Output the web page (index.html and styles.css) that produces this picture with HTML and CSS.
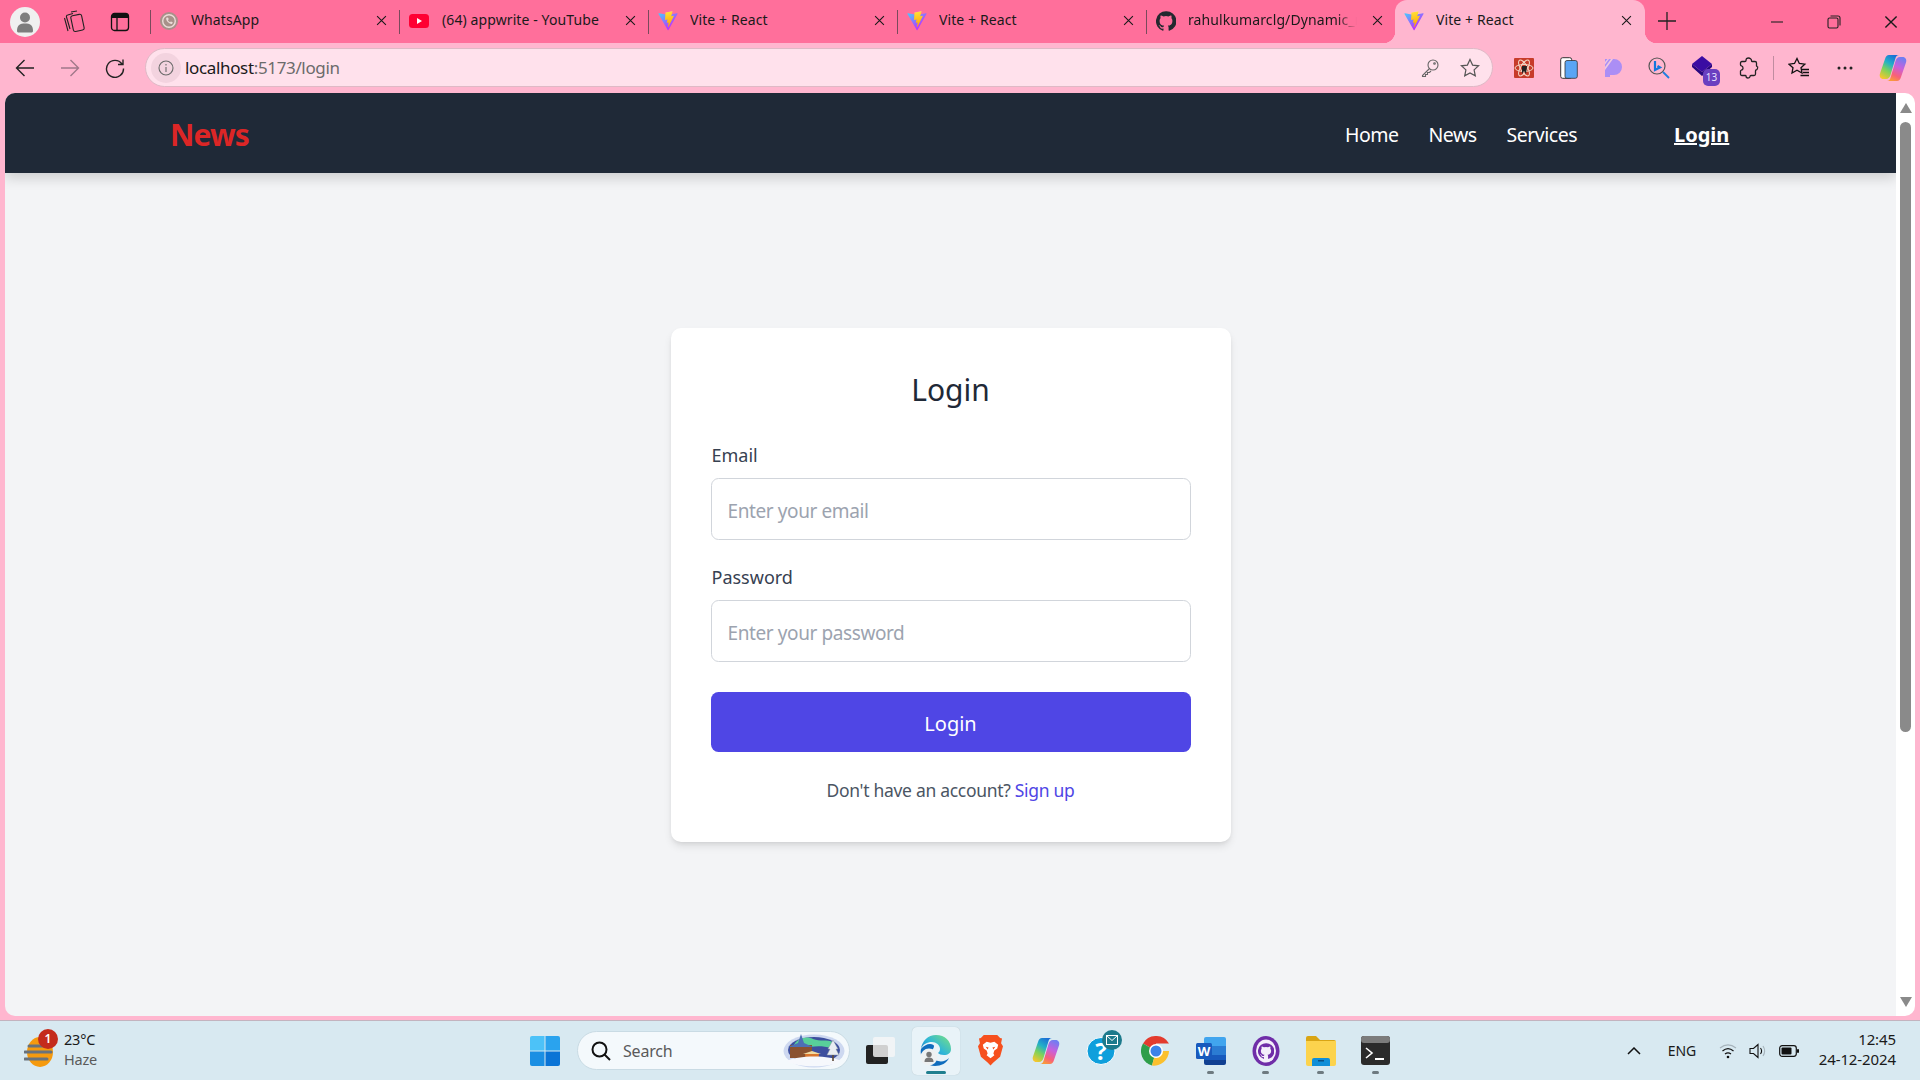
FILE: index.html
```html
<!DOCTYPE html>
<html lang="en">
<head>
<meta charset="utf-8">
<title>Vite + React</title>
<link rel="stylesheet" href="styles.css">
</head>
<body>
<svg class="defs" width="0" height="0" aria-hidden="true">
  <defs>
    <linearGradient id="va" x1="6" y1="33" x2="235" y2="344" gradientUnits="userSpaceOnUse"><stop offset="0" stop-color="#41d1ff"/><stop offset="1" stop-color="#bd34fe"/></linearGradient>
    <linearGradient id="vb" x1="194" y1="8" x2="236" y2="292" gradientUnits="userSpaceOnUse"><stop offset="0" stop-color="#ffea83"/><stop offset=".08" stop-color="#ffdd35"/><stop offset="1" stop-color="#ffa800"/></linearGradient>
    <linearGradient id="cop" x1=".7" y1="0" x2=".2" y2="1"><stop offset="0" stop-color="#1c6fd6"/><stop offset=".35" stop-color="#22b0c8"/><stop offset=".65" stop-color="#7fd25a"/><stop offset="1" stop-color="#f6c62e"/></linearGradient>
    <linearGradient id="cop2" x1=".7" y1="0" x2=".3" y2="1"><stop offset="0" stop-color="#6f7df2"/><stop offset=".4" stop-color="#c860dc"/><stop offset=".75" stop-color="#f8607a"/><stop offset="1" stop-color="#f99a3a"/></linearGradient>
    <linearGradient id="edge" x1="0" y1="1" x2="1" y2=".2"><stop offset="0" stop-color="#1a6fc0"/><stop offset=".5" stop-color="#2fb6d8"/><stop offset="1" stop-color="#6fdc8c"/></linearGradient>
    <symbol id="vite" viewBox="0 0 410 404">
      <path fill="url(#va)" d="M399.641 59.5246L215.643 388.545C211.844 395.338 202.084 395.378 198.228 388.618L10.5817 59.5563C6.38087 52.1896 12.6802 43.2665 21.0281 44.7586L205.223 77.6824C206.398 77.8924 207.601 77.8904 208.776 77.6763L389.119 44.8058C397.439 43.2894 403.768 52.1434 399.641 59.5246Z"/>
      <path fill="url(#vb)" d="M292.965 1.5744L156.801 28.2552C154.563 28.6937 152.906 30.5903 152.771 32.8664L144.395 174.33C144.198 177.662 147.258 180.248 150.51 179.498L188.42 170.749C191.967 169.931 195.172 173.055 194.443 176.622L183.18 231.775C182.422 235.487 185.907 238.661 189.532 237.56L212.947 230.446C216.577 229.344 220.065 232.527 219.297 236.242L201.398 322.875C200.278 328.294 207.486 331.249 210.492 326.603L212.5 323.5L323.454 102.072C325.312 98.3645 322.108 94.137 318.036 94.9228L279.014 102.454C275.347 103.161 272.227 99.746 273.262 96.1583L298.731 7.86689C299.767 4.27314 296.636 0.855181 292.965 1.5744Z"/>
    </symbol>
    <symbol id="x" viewBox="0 0 12 12"><path d="M1.2 1.2l9.6 9.6M10.8 1.2l-9.6 9.6" fill="none" stroke="#1a1a1a" stroke-width="1.2"/></symbol>
    <symbol id="gh" viewBox="0 0 24 24"><path d="M12 .3a12 12 0 0 0-3.8 23.4c.6.1.8-.3.8-.6v-2c-3.3.7-4-1.6-4-1.6-.6-1.4-1.4-1.8-1.4-1.8-1-.7.1-.7.1-.7 1.2.1 1.8 1.2 1.8 1.2 1 1.8 2.8 1.3 3.5 1 .1-.8.4-1.3.8-1.6-2.7-.3-5.5-1.3-5.5-6 0-1.2.5-2.3 1.3-3.1-.2-.4-.6-1.6 0-3.2 0 0 1-.3 3.4 1.2a11.5 11.5 0 0 1 6 0c2.3-1.5 3.3-1.2 3.3-1.2.7 1.6.3 2.8.1 3.2.8.8 1.3 1.9 1.3 3.1 0 4.7-2.8 5.7-5.5 6 .5.4.9 1.1.9 2.3v3.3c0 .3.2.7.8.6A12 12 0 0 0 12 .3z"/></symbol>
    <symbol id="copilot" viewBox="0 0 30 30">
      <path fill="url(#cop)" d="M11 2h10c-2 0-3 1.500-3.600 3.500L12.500 22c-.6 2-2 4-4.500 4H5.500C2.500 26 1 23.500 2 20.500L7 6c.8-2.500 2-4 4-4z"/>
      <path fill="url(#cop2)" d="M19 28H9c2 0 3-1.500 3.600-3.500L17.500 8c.6-2 2-4 4.500-4h2.500c3 0 4.500 2.500 3.500 5.500L23 24c-.8 2.500-2 4-4 4z"/>
    </symbol>
  </defs>
</svg>

<header class="tabstrip">
  <div class="strip-left">
    <div class="avatar">
      <svg width="20" height="22" viewBox="0 0 20 22"><circle cx="10" cy="6.500" r="5" fill="#7d7d7d"/><path d="M2 20c0-6 3-7.500 8-7.500s8 1.500 8 7.500c0 1-1 1.500-2 1.500H4c-1 0-2-.5-2-1.500z" fill="#7d7d7d"/></svg>
    </div>
    <svg class="strip-icon" width="22" height="24" viewBox="0 0 22 24" fill="none" stroke="#222" stroke-width="1.100"><rect x="9" y="5" width="11" height="16" rx="2" transform="rotate(-12 14 13)"/><path d="M7 19L3.500 7c-.3-1 .2-1.800 1.200-2L10 3.500M5 21 1.500 8M8 2l6-1"/></svg>
    <svg class="strip-icon second" width="20" height="20" viewBox="0 0 20 20"><rect x="1.500" y="1.500" width="17" height="17" rx="3" fill="none" stroke="#111" stroke-width="1.300"/><path d="M1.500 4.500a3 3 0 0 1 3-3h11a3 3 0 0 1 3 3V6h-17z" fill="#111"/><path d="M7 6v12" stroke="#111" stroke-width="1.300"/></svg>
  </div>
  <nav class="tabs">
    <div class="tab sep">
      <svg class="favicon wa" width="18" height="18" viewBox="0 0 18 18"><circle cx="9" cy="9" r="9" fill="#a8918a"/><circle cx="9" cy="9" r="6.300" fill="none" stroke="#ecdcd8" stroke-width="1.400"/><path d="M6.300 5.800c-.9 2.700 2.700 6.400 5.700 6.100l.8-1.600-1.900-.9-.9.900c-1.100-.4-1.800-1.300-2.100-2.200l.9-.8-.8-1.900z" fill="#ecdcd8"/></svg>
      <span class="title">WhatsApp</span>
      <svg class="close" width="11" height="11"><use href="#x"/></svg>
    </div>
    <div class="tab sep">
      <svg class="favicon yt" width="20" height="14" viewBox="0 0 20 14"><rect width="20" height="14" rx="3.500" fill="#ff0033"/><path d="M8 4l5 3-5 3z" fill="#fff"/></svg>
      <span class="title">(64) appwrite - YouTube</span>
      <svg class="close" width="11" height="11"><use href="#x"/></svg>
    </div>
    <div class="tab sep">
      <svg class="favicon" width="20" height="20"><use href="#vite"/></svg>
      <span class="title">Vite + React</span>
      <svg class="close" width="11" height="11"><use href="#x"/></svg>
    </div>
    <div class="tab sep">
      <svg class="favicon" width="20" height="20"><use href="#vite"/></svg>
      <span class="title">Vite + React</span>
      <svg class="close" width="11" height="11"><use href="#x"/></svg>
    </div>
    <div class="tab sep">
      <svg class="favicon" width="20" height="20" fill="#24292f"><use href="#gh"/></svg>
      <span class="title clip">rahulkumarclg/Dynamic_r</span>
      <svg class="close" width="11" height="11"><use href="#x"/></svg>
    </div>
    <div class="tab active">
      <svg class="favicon" width="20" height="20"><use href="#vite"/></svg>
      <span class="title">Vite + React</span>
      <svg class="close" width="11" height="11"><use href="#x"/></svg>
    </div>
  </nav>
  <svg class="newtab" width="18" height="18" viewBox="0 0 18 18"><path d="M9 0v18M0 9h18" stroke="#222" stroke-width="1.300"/></svg>
  <div class="winctl">
    <svg width="14" height="14" viewBox="0 0 14 14"><path d="M1 7h12" stroke="#222" stroke-width="1.100"/></svg>
    <svg width="14" height="14" viewBox="0 0 14 14" fill="none" stroke="#222" stroke-width="1.100"><rect x="1" y="3" width="10" height="10" rx="1.500"/><path d="M3.500 1H11a2 2 0 0 1 2 2v7.500"/></svg>
    <svg width="14" height="14"><use href="#x"/></svg>
  </div>
</header>

<div class="toolbar">
  <div class="nav-btns">
    <svg width="20" height="20" viewBox="0 0 20 20" fill="none" stroke="#222" stroke-width="1.400"><path d="M19 10H1.500M9.500 2l-8 8 8 8"/></svg>
    <svg width="20" height="20" viewBox="0 0 20 20" fill="none" stroke="#a0788a" stroke-width="1.400"><path d="M1 10h17.500M10.500 2l8 8-8 8"/></svg>
    <svg width="20" height="20" viewBox="0 0 20 20" fill="none" stroke="#222" stroke-width="1.400"><path d="M17 6a8.500 8.500 0 1 0 1.500 4.500M18 1.500V6.500h-5"/></svg>
  </div>
  <div class="address">
    <span class="info"><svg width="16" height="16" viewBox="0 0 16 16" fill="none" stroke="#6a6a6a" stroke-width="1.100"><circle cx="8" cy="8" r="7"/><path d="M8 7v5M8 4v1.400"/></svg></span>
    <span class="url"><span class="host">localhost</span>:5173/login</span>
    <svg class="addr-icon" width="20" height="20" viewBox="0 0 20 20" fill="none" stroke="#666" stroke-width="1.100"><circle cx="13" cy="7" r="5"/><path d="M9.500 10.500 2.500 17.500v1h3v-2h2v-2h2l1.500-1.500"/><circle cx="14.500" cy="5.500" r=".8"/></svg>
    <svg class="addr-icon last" width="20" height="20" viewBox="0 0 20 20" fill="none" stroke="#555" stroke-width="1.200"><path d="M10 1.500l2.600 5.600 6 .7-4.500 4.100 1.200 6L10 15l-5.300 2.900 1.200-6L1.400 7.800l6-.7z"/></svg>
  </div>
  <div class="exts">
    <span class="ext"><svg width="20" height="20" viewBox="0 0 20 20"><rect width="20" height="20" rx="1" fill="#c73b2a"/><g fill="none" stroke="#f3d9c8" stroke-width="1"><ellipse cx="10" cy="10" rx="9" ry="3.500"/><ellipse cx="10" cy="10" rx="9" ry="3.500" transform="rotate(60 10 10)"/><ellipse cx="10" cy="10" rx="9" ry="3.500" transform="rotate(120 10 10)"/></g><path d="M8 8h5l-1 8-2-3-2 3z" fill="#222"/></svg></span>
    <span class="ext"><svg width="18" height="22" viewBox="0 0 18 22"><rect x=".7" y=".7" width="11" height="20.600" rx="2" fill="#fff" stroke="#333"/><rect x="5" y="3.500" width="12.300" height="17.800" rx="2" fill="#5aa5f5" stroke="#333" stroke-width=".8"/></svg></span>
    <span class="ext"><svg width="18" height="18" viewBox="0 0 18 18"><path d="M0 0h9a8 8 0 0 1 0 16H5v2H0z" fill="#ab8ef5"/><path d="M0 8 6 0h2L0 11zM0 3 2.500 0H4L0 5.500z" fill="#f0c8e0"/></svg></span>
    <span class="ext"><svg width="22" height="22" viewBox="0 0 22 22" fill="none"><circle cx="9" cy="9" r="8" stroke="#555" stroke-width="1.200"/><path d="M15 15l6 6" stroke="#1f7fe0" stroke-width="1.800"/><path d="M7 4v9l5-2.500-2.500-1.500" stroke="#1277dd" stroke-width="2.200"/></svg></span>
    <span class="ext ext-badged"><svg width="20" height="20" viewBox="0 0 20 20"><path d="M10 0l10 8-10 8L0 8z" fill="#3a0ca3"/><path d="M0 8v3l10 9 10-9V8l-10 8z" fill="#280880"/></svg><span class="count">13</span></span>
    <span class="ext"><svg width="20" height="22" viewBox="0 0 20 22" fill="none" stroke="#222" stroke-width="1.300"><path d="M7 3.500C7 1.800 8.300 1 9.600 1S12.500 2 12.500 3.500c0 .7 0 1 .5 1h3c1 0 1.500.5 1.500 1.500v3c0 .5.500.5 1 .5M18.500 9.500c.5 2-.5 3.500-1.500 3.500-.5 0-.5.500-.5 1v3c0 1-.5 1.500-1.500 1.500h-3c-.5 0-1 .5-1 1 0 1-1 1.500-2 1.500s-2-1-2-2c0-.5-.3-.5-.8-.5H3c-1 0-1.500-.5-1.500-1.500v-3c0-.5.500-.8 1-1 1 0 1.500-1 1.500-2s-.5-2-1.500-2.200c-.5 0-1-.5-1-1V6c0-1 .5-1.500 1.500-1.500h3c.5 0 1-.3 1-1"/></svg></span>
    <span class="tool-sep"></span>
    <span class="ext"><svg width="22" height="22" viewBox="0 0 22 22" fill="none" stroke="#111" stroke-width="1.300"><path d="M9 1.500l2.300 5 5.500.7-3.800 3.500 1 5.300-5-2.700-5 2.700 1-5.300L1 7.200l5.500-.7z"/><path d="M14 12.500h7M15 15.500h6M12.500 18.500h8.500"/></svg></span>
    <span class="ext dots"><svg width="16" height="4" viewBox="0 0 16 4" fill="#222"><circle cx="2" cy="2" r="1.500"/><circle cx="8" cy="2" r="1.500"/><circle cx="14" cy="2" r="1.500"/></svg></span>
    <span class="ext wide"><svg width="30" height="30"><use href="#copilot"/></svg></span>
  </div>
</div>

<div class="viewport">
  <div class="page">
    <header class="site-nav">
      <a class="brand">News</a>
      <div class="site-links">
        <a class="site-link">Home</a>
        <a class="site-link">News</a>
        <a class="site-link">Services</a>
      </div>
      <a class="site-login">Login</a>
    </header>
    <main class="page-body">
      <form class="card">
        <h2 class="card-title">Login</h2>
        <div class="field">
          <label class="label">Email</label>
          <input class="input" type="email" placeholder="Enter your email">
        </div>
        <div class="field">
          <label class="label">Password</label>
          <input class="input" type="password" placeholder="Enter your password">
        </div>
        <button class="submit" type="button">Login</button>
        <p class="foot">Don't have an account? <a class="signup">Sign up</a></p>
      </form>
    </main>
  </div>
  <div class="scrollbar">
    <span class="arrow up"></span>
    <span class="thumb"></span>
    <span class="arrow down"></span>
  </div>
</div>

<footer class="taskbar">
  <div class="weather">
    <span class="weather-icon">
      <svg width="32" height="34" viewBox="0 0 32 34"><ellipse cx="16" cy="19" rx="13" ry="15" fill="#f59a0e"/><path d="M1 19h26M5 13h16M1 26h22" stroke="#68727c" stroke-width="3" stroke-linecap="round"/></svg>
      <span class="weather-badge">1</span>
    </span>
    <span class="weather-text"><span class="temp">23°C</span><span class="cond">Haze</span></span>
  </div>
  <svg class="winlogo" width="30" height="30" viewBox="0 0 30 30"><path d="M0 2a2 2 0 0 1 2-2h12.500v14.500H0z" fill="#4cc2f8"/><path d="M15.500 0H28a2 2 0 0 1 2 2v12.500H15.500z" fill="#2aa3ee"/><path d="M0 15.500h14.500V30H2a2 2 0 0 1-2-2z" fill="#1b8fe3"/><path d="M15.500 15.500H30V28a2 2 0 0 1-2 2H15.500z" fill="#0a74d6"/></svg>
  <div class="search">
    <svg width="20" height="20" viewBox="0 0 20 20" fill="none" stroke="#111" stroke-width="2"><circle cx="8.500" cy="8.500" r="7"/><path d="M13.500 13.500l5.500 5.500"/></svg>
    <span class="search-text">Search</span>
    <svg class="scene" width="62" height="34" viewBox="0 0 62 34"><ellipse cx="31" cy="17" rx="30.500" ry="16.500" fill="#cdd8f0"/><ellipse cx="31" cy="16" rx="26" ry="13" fill="#3d4f9e"/><path d="M10 13C14 3 24 2 30 5c7 3 14 0 20 3l-2 6c-10-3-20-2-28 1z" fill="#58cf9a"/><path d="M7 11h22v13H7z" fill="#8a5230"/><path d="M18 0l3 9 9 4H5l10-4z" fill="#4d6fb4"/><path d="M22 20h14l-1 8H23z" fill="#d9762e"/><path d="M20 20l9-3 9 3z" fill="#f0d9a0"/><path d="M4 27c10-6 44-6 54 0-10 7-44 7-54 0z" fill="#f6f8fc"/><path d="M50 6l5 9h-2l3 6h-12l3-6h-2z" fill="#e9edf2" stroke="#8a96a2" stroke-width=".5"/><rect x="49.200" y="21" width="1.600" height="6" fill="#5c4a3a"/></svg>
  </div>
  <div class="apps">
    <span class="app"><svg width="29" height="27" viewBox="0 0 29 27"><rect x="0" y="8" width="22" height="19" rx="2" fill="#222"/><rect x="7" y="0" width="22" height="20" rx="2" fill="#f6f6f6" fill-opacity=".82"/></svg></span>
    <span class="app current"><svg width="31" height="31" viewBox="0 0 31 31"><path d="M1 14C2 6 8 0 16 0c9 0 15 6 15 14 0 4-3 6-7 6-3 0-5-1-6-2 1-1 2-2 2-4 0-4-4-7-8-7C7 7 3 9 1 14z" fill="url(#edge)"/><path d="M1 14c2-3 6-5 9-5 4 0 5 2 3 5-2 4 0 10 5 12 4 1 8 0 11-3-2 5-8 8-14 8C7 31-1 24 1 14z" fill="#0f6cbd"/><circle cx="9" cy="22" r="8.500" fill="#eef1f2"/><circle cx="9" cy="19.500" r="2.700" fill="#777"/><path d="M4.500 27c0-3.500 2-4.500 4.500-4.500s4.500 1 4.500 4.500z" fill="#777"/></svg></span>
    <span class="app"><svg width="25" height="31" viewBox="0 0 26 32"><path d="M6 0h14l3 3 2 .5-1 5 2 3-3 11-7 6-3 3-3-3-7-6-3-11 2-3-1-5 2-.5z" fill="#f6501e"/><path d="M5 10l4-3 4 1 4-1 4 3-1 4-3 2-1 3 1 2-4 3-4-3 1-2-1-3-3-2z" fill="#fff"/><path d="M8 12l3 1-1 2zM18 12l-3 1 1 2z" fill="#f6501e"/></svg></span>
    <span class="app"><svg width="30" height="30"><use href="#copilot"/></svg></span>
    <span class="app"><svg class="over" width="42" height="38" viewBox="0 0 42 38"><ellipse cx="21" cy="19" rx="14" ry="13.500" fill="#0f9fdc" stroke="#fff"/><text x="21" y="28" class="help-mark">?</text><circle cx="32" cy="8" r="10" fill="#1d7a8c"/><rect x="26.500" y="3.500" width="11" height="9" fill="none" stroke="#fff"/><path d="M26.500 3.500l5.500 5 5.500-5" fill="none" stroke="#fff"/></svg></span>
    <span class="app"><svg width="30" height="30" viewBox="0 0 30 30"><path d="M15 15 2 7.500A15 15 0 0 1 28 7.500H15z" fill="#e33b2e"/><path d="M15 15 2 7.500A15 15 0 0 0 11 29.500z" fill="#2e9e4a"/><path d="M15 15h13A15 15 0 0 1 11 29.500z" fill="#fbc02d"/><circle cx="15" cy="15" r="7" fill="#fff"/><circle cx="15" cy="15" r="5.500" fill="#3b82e8"/></svg></span>
    <span class="app dotted"><svg width="30" height="28" viewBox="0 0 30 28"><path d="M8 2a2 2 0 0 1 2-2h18a2 2 0 0 1 2 2v7H8z" fill="#41a5ee"/><rect x="8" y="9" width="22" height="9" fill="#2b7cd3"/><rect x="8" y="18" width="22" height="5" fill="#185abd"/><path d="M8 23h22v3a2 2 0 0 1-2 2H10a2 2 0 0 1-2-2z" fill="#103f91"/><rect x="0" y="6" width="16" height="16" rx="1.500" fill="#185abd"/><text x="8" y="18.500" class="word-mark">W</text></svg></span>
    <span class="app dotted"><svg width="28" height="30" viewBox="0 0 28 30"><ellipse cx="14" cy="15" rx="13.500" ry="15" fill="#6f2da8"/><ellipse cx="14" cy="15" rx="10" ry="11.500" fill="#f3eefa"/><svg x="6" y="6" width="16" height="18" fill="#6f2da8"><use href="#gh"/></svg></svg></span>
    <span class="app dotted"><svg width="30" height="30" viewBox="0 0 30 30"><path d="M0 2a2 2 0 0 1 2-2h8l4 4h14a2 2 0 0 1 2 2v4H0z" fill="#d9a514"/><path d="M0 5h30v23a2 2 0 0 1-2 2H2a2 2 0 0 1-2-2z" fill="#fcd34d"/><path d="M6 30v-6a2 2 0 0 1 2-2h14a2 2 0 0 1 2 2v6z" fill="#0f8ed8"/><rect x="12" y="24" width="6" height="1.500" fill="#0a4f84"/></svg></span>
    <span class="app dotted"><svg width="29" height="29" viewBox="0 0 29 29"><rect width="29" height="29" rx="3" fill="#2b2b2b"/><rect width="29" height="7" rx="3" fill="#7c7c7c"/><path d="M5 12l6 5-6 5" fill="none" stroke="#fff" stroke-width="1.600"/><path d="M14 23h9" stroke="#fff" stroke-width="2"/></svg></span>
  </div>
  <div class="tray">
    <svg class="chev" width="14" height="8" viewBox="0 0 14 8" fill="none" stroke="#111" stroke-width="1.500"><path d="M1 7l6-6 6 6"/></svg>
    <span class="lang">ENG</span>
    <svg class="wifi" width="18" height="16" viewBox="0 0 18 16" fill="none" stroke="#111" stroke-width="1.200"><path d="M1 5c5-4 11-4 16 0" stroke="#a7b4bc"/><path d="M3.500 8c3.500-3 7.500-3 11 0M6 11c2-1.500 4-1.500 6 0"/><circle cx="9" cy="14" r="1.300" fill="#111" stroke="none"/></svg>
    <svg class="vol" width="20" height="16" viewBox="0 0 20 16" fill="none" stroke="#111" stroke-width="1.100"><path d="M1 5.500h3.500L9 1.500v13l-4.500-4H1z"/><path d="M11.500 5c1.300 1.800 1.300 4.200 0 6"/><path d="M14 3c2 3 2 7 0 10" stroke="#a7b4bc"/></svg>
    <svg class="batt" width="20" height="12" viewBox="0 0 20 12"><rect x=".7" y=".7" width="16.600" height="10.600" rx="2.500" fill="none" stroke="#111" stroke-width="1.200"/><rect x="2.500" y="2.500" width="10" height="7" rx="1" fill="#111"/><rect x="18" y="4" width="2" height="4" rx="1" fill="#111"/></svg>
    <span class="clock"><span>12:45</span><span>24-12-2024</span></span>
  </div>
</footer>
</body>
</html>
```

FILE: styles.css
```css
* { box-sizing: border-box; }
html, body { margin: 0; padding: 0; }
body {
  width: 1920px;
  height: 1080px;
  overflow: hidden;
  display: flex;
  flex-direction: column;
  font-family: "Noto Sans", "Open Sans", sans-serif;
  background: #ffb6cf;
}
.defs { position: absolute; }
.over { overflow: visible; }

/* browser tab strip */
.tabstrip {
  height: 43px;
  flex: none;
  display: flex;
  align-items: center;
  background: #ff6f9b;
}
.strip-left { width: 150px; flex: none; display: flex; align-items: center; padding-left: 10px; }
.avatar {
  width: 30px; height: 30px; border-radius: 50%;
  background: #f0f0f0;
  display: flex; align-items: center; justify-content: center;
}
.strip-icon { margin-left: 23px; }
.strip-icon.second { margin-left: 25px; }
.tabs { display: flex; height: 43px; }
.tab {
  width: 249px;
  height: 43px;
  display: flex;
  align-items: center;
  padding: 0 0 2px 10px;
  position: relative;
  font-size: 14px;
  color: #1a1a1a;
}
.tab.sep::before {
  content: "";
  position: absolute;
  left: 0; top: 10px;
  width: 1px; height: 24px;
  background: #7a4a5c;
}
.favicon { flex: none; margin-right: 12px; }
.favicon.yt { margin-right: 13px; }
.favicon.wa { margin-right: 13px; }
.title { flex: 1; white-space: nowrap; overflow: hidden; letter-spacing: .1px; margin-bottom: 2px; }
.title.clip {
  flex: none;
  width: 169px;
  -webkit-mask-image: linear-gradient(to right, #000 88%, transparent);
  mask-image: linear-gradient(to right, #000 88%, transparent);
}
.close { flex: none; margin-left: auto; margin-right: 12px; }
.tab.active {
  width: 250px;
  background: #ffb6cf;
  border-radius: 12px 12px 0 0;
  padding-left: 9px;
}
.tab.active .close { margin-right: 13px; }
.tab.active::before, .tab.active::after {
  content: "";
  position: absolute;
  bottom: 0;
  width: 12px; height: 12px;
}
.tab.active::before { left: -12px; background: radial-gradient(circle at 0 0, transparent 12px, #ffb6cf 12.5px); }
.tab.active::after { right: -12px; background: radial-gradient(circle at 100% 0, transparent 12px, #ffb6cf 12.5px); }
.newtab { margin-left: 13px; flex: none; margin-bottom: 2px; }
.winctl { margin-left: auto; display: flex; align-items: center; gap: 43px; padding-right: 22px; }

/* browser toolbar */
.toolbar {
  height: 50px;
  flex: none;
  display: flex;
  align-items: center;
  background: #ffb6cf;
  padding-bottom: 1px;
}
.nav-btns { width: 145px; flex: none; display: flex; gap: 25px; padding-left: 15px; }
.address {
  width: 1348px;
  height: 39px;
  flex: none;
  display: flex;
  align-items: center;
  background: #ffe1ec;
  border: 1px solid #dfb9c6;
  border-radius: 20px;
  padding-left: 5px;
  font-size: 17px;
}
.info {
  width: 30px; height: 30px; border-radius: 50%;
  background: #f3d3df;
  display: flex; align-items: center; justify-content: center;
  flex: none;
}
.url { flex: 1; margin-left: 4px; color: #6b6b6b; letter-spacing: -.35px; }
.host { color: #1a1a1a; }
.addr-icon { flex: none; margin-right: 20px; }
.addr-icon.last { margin-right: 12px; }
.exts { display: flex; align-items: center; padding-left: 8px; }
.ext {
  width: 45px; height: 30px;
  flex: none;
  display: flex; align-items: center; justify-content: center;
  position: relative;
}
.ext.wide { width: 50px; }
.ext-badged svg { margin-right: 4px; margin-top: -3px; }
.count {
  position: absolute;
  right: 6px; bottom: -3px;
  width: 17px; height: 17px;
  border-radius: 5px;
  background: #6a3fc0;
  color: #e8e0ff;
  font-size: 10px;
  line-height: 17px;
  text-align: center;
}
.tool-sep { width: 1px; height: 24px; background: #c08ca0; margin: 0 2px; flex: none; }
.dots { width: 47px; }

/* viewport */
.viewport {
  flex: 1;
  min-height: 0;
  display: flex;
  padding: 0 5px 4px 5px;
  background: #ffb6cf;
}
.page {
  flex: 1;
  min-width: 0;
  display: flex;
  flex-direction: column;
  background: #f3f4f6;
  border-radius: 10px 0 0 10px;
  overflow: hidden;
}
.site-nav {
  height: 80px;
  flex: none;
  display: flex;
  align-items: center;
  background: #1f2937;
  color: #fff;
  padding: 2px 0 0 165px;
  box-shadow: 0 5px 12px rgba(0,0,0,.16);
  position: relative;
}
.brand { color: #dc2626; font-size: 30px; font-weight: 700; letter-spacing: -.9px; width: 1175px; }
.site-links { display: flex; gap: 30px; font-size: 19.5px; letter-spacing: -.5px; width: 329px; }
.site-login { font-size: 20px; font-weight: 700; text-decoration: underline; letter-spacing: 0; }
.page-body { flex: 1; padding-top: 155px; display: flex; justify-content: center; }
.card {
  width: 560px;
  height: 514px;
  background: #fff;
  border-radius: 10px;
  padding: 40px;
  box-shadow: 0 5px 8px -1px rgba(0,0,0,.1), 0 2px 5px -2px rgba(0,0,0,.1);
}
.card-title {
  margin: 0 0 30px;
  height: 44px;
  line-height: 44px;
  text-align: center;
  font-size: 30px;
  font-weight: 400;
  color: #1f2937;
  letter-spacing: 0;
}
.field { margin-bottom: 24px; }
.label {
  display: block;
  height: 25px;
  line-height: 25px;
  margin-bottom: 11px;
  padding: 1px 0 0 1px;
  font-size: 18px;
  font-weight: 400;
  color: #374151;
  letter-spacing: 0;
}
.input {
  display: block;
  width: 100%;
  height: 62px;
  padding: 4px 16px 0;
  border: 1px solid #d1d5db;
  border-radius: 7.5px;
  background: #fff;
  font-family: inherit;
  font-size: 19px;
  letter-spacing: -.4px;
  outline: none;
}
.input::placeholder { color: #9ca3af; opacity: 1; }
.submit {
  display: block;
  width: 100%;
  height: 60px;
  margin-top: 30px;
  padding: 2px 0 0;
  border: 0;
  border-radius: 7.5px;
  background: #4f46e5;
  color: #fff;
  font-family: inherit;
  font-size: 20px;
  font-weight: 400;
  letter-spacing: 0;
}
.foot {
  margin: 26px 0 0;
  height: 25px;
  line-height: 25px;
  text-align: center;
  font-size: 17.5px;
  color: #4b5563;
  letter-spacing: -.3px;
}
.signup { color: #4f46e5; }

/* scrollbar */
.scrollbar {
  width: 19px;
  flex: none;
  background: #fff;
  border-radius: 0 10px 10px 0;
  display: flex;
  flex-direction: column;
  align-items: center;
  padding: 10px 0 9px;
}
.arrow { width: 0; height: 0; border-left: 6.5px solid transparent; border-right: 6.5px solid transparent; flex: none; }
.arrow.up { border-bottom: 10px solid #8a8a8a; }
.arrow.down { border-top: 10px solid #8a8a8a; margin-top: auto; }
.thumb { width: 11px; height: 610px; margin-top: 9px; border-radius: 6px; background: #8a8a8a; flex: none; }

/* taskbar */
.taskbar {
  height: 60px;
  flex: none;
  display: flex;
  align-items: center;
  background: #d8e9f1;
  border-top: 1px solid #c3b3bf;
  color: #1a1a1a;
}
.weather { display: flex; align-items: center; width: 530px; flex: none; padding-left: 24px; }
.weather-icon { position: relative; width: 40px; height: 36px; flex: none; }
.weather-badge {
  position: absolute;
  left: 14px; top: -4px;
  width: 20px; height: 20px;
  border-radius: 50%;
  background: #c42b1c;
  color: #fff;
  font-size: 12px;
  font-weight: 600;
  line-height: 20px;
  text-align: center;
}
.weather-text { display: flex; flex-direction: column; font-size: 14.5px; line-height: 20px; letter-spacing: -.2px; padding-bottom: 3px; }
.cond { color: #5a5a5a; }
.winlogo { flex: none; }
.search {
  width: 273px;
  height: 39px;
  flex: none;
  margin-left: 17px;
  display: flex;
  align-items: center;
  padding-left: 13px;
  background: #f4f9fc;
  border: 1px solid #c9dbe4;
  border-radius: 20px;
}
.search-text { margin-left: 12px; font-size: 16px; color: #5a5a5a; flex: 1; letter-spacing: -.2px; }
.scene { flex: none; margin-right: 4px; }
.apps { display: flex; margin-left: 3px; }
.app {
  width: 55px; height: 48px;
  flex: none;
  display: flex; align-items: center; justify-content: center;
  position: relative;
}
.app.current { background: #e9f3f8; border-radius: 5px; width: 48px; margin: 0 3.5px; box-shadow: 0 0 1px rgba(0,0,0,.2); }
.app.current::after {
  content: "";
  position: absolute;
  bottom: 1px; left: 14px;
  width: 20px; height: 3px;
  border-radius: 2px;
  background: #1f7f8f;
}
.app.dotted::after {
  content: "";
  position: absolute;
  bottom: 1px; left: 24px;
  width: 7px; height: 3px;
  border-radius: 2px;
  background: #6e7a80;
}
.help-mark { font-family: "Noto Sans", sans-serif; font-size: 24px; font-weight: 700; fill: #fff; text-anchor: middle; }
.word-mark { font-family: "Noto Sans", sans-serif; font-size: 13px; font-weight: 700; fill: #fff; text-anchor: middle; }
.tray { margin-left: auto; display: flex; align-items: center; padding-right: 24px; }
.lang { font-size: 14px; margin-left: 27px; width: 28px; }
.chev { flex: none; }
.wifi { margin-left: 23px; flex: none; }
.vol { margin-left: 12px; flex: none; }
.batt { margin-left: 10px; flex: none; }
.clock { display: flex; flex-direction: column; align-items: flex-end; font-size: 15px; line-height: 20px; margin-left: 20px; letter-spacing: -.1px; padding-bottom: 3px; }
```
